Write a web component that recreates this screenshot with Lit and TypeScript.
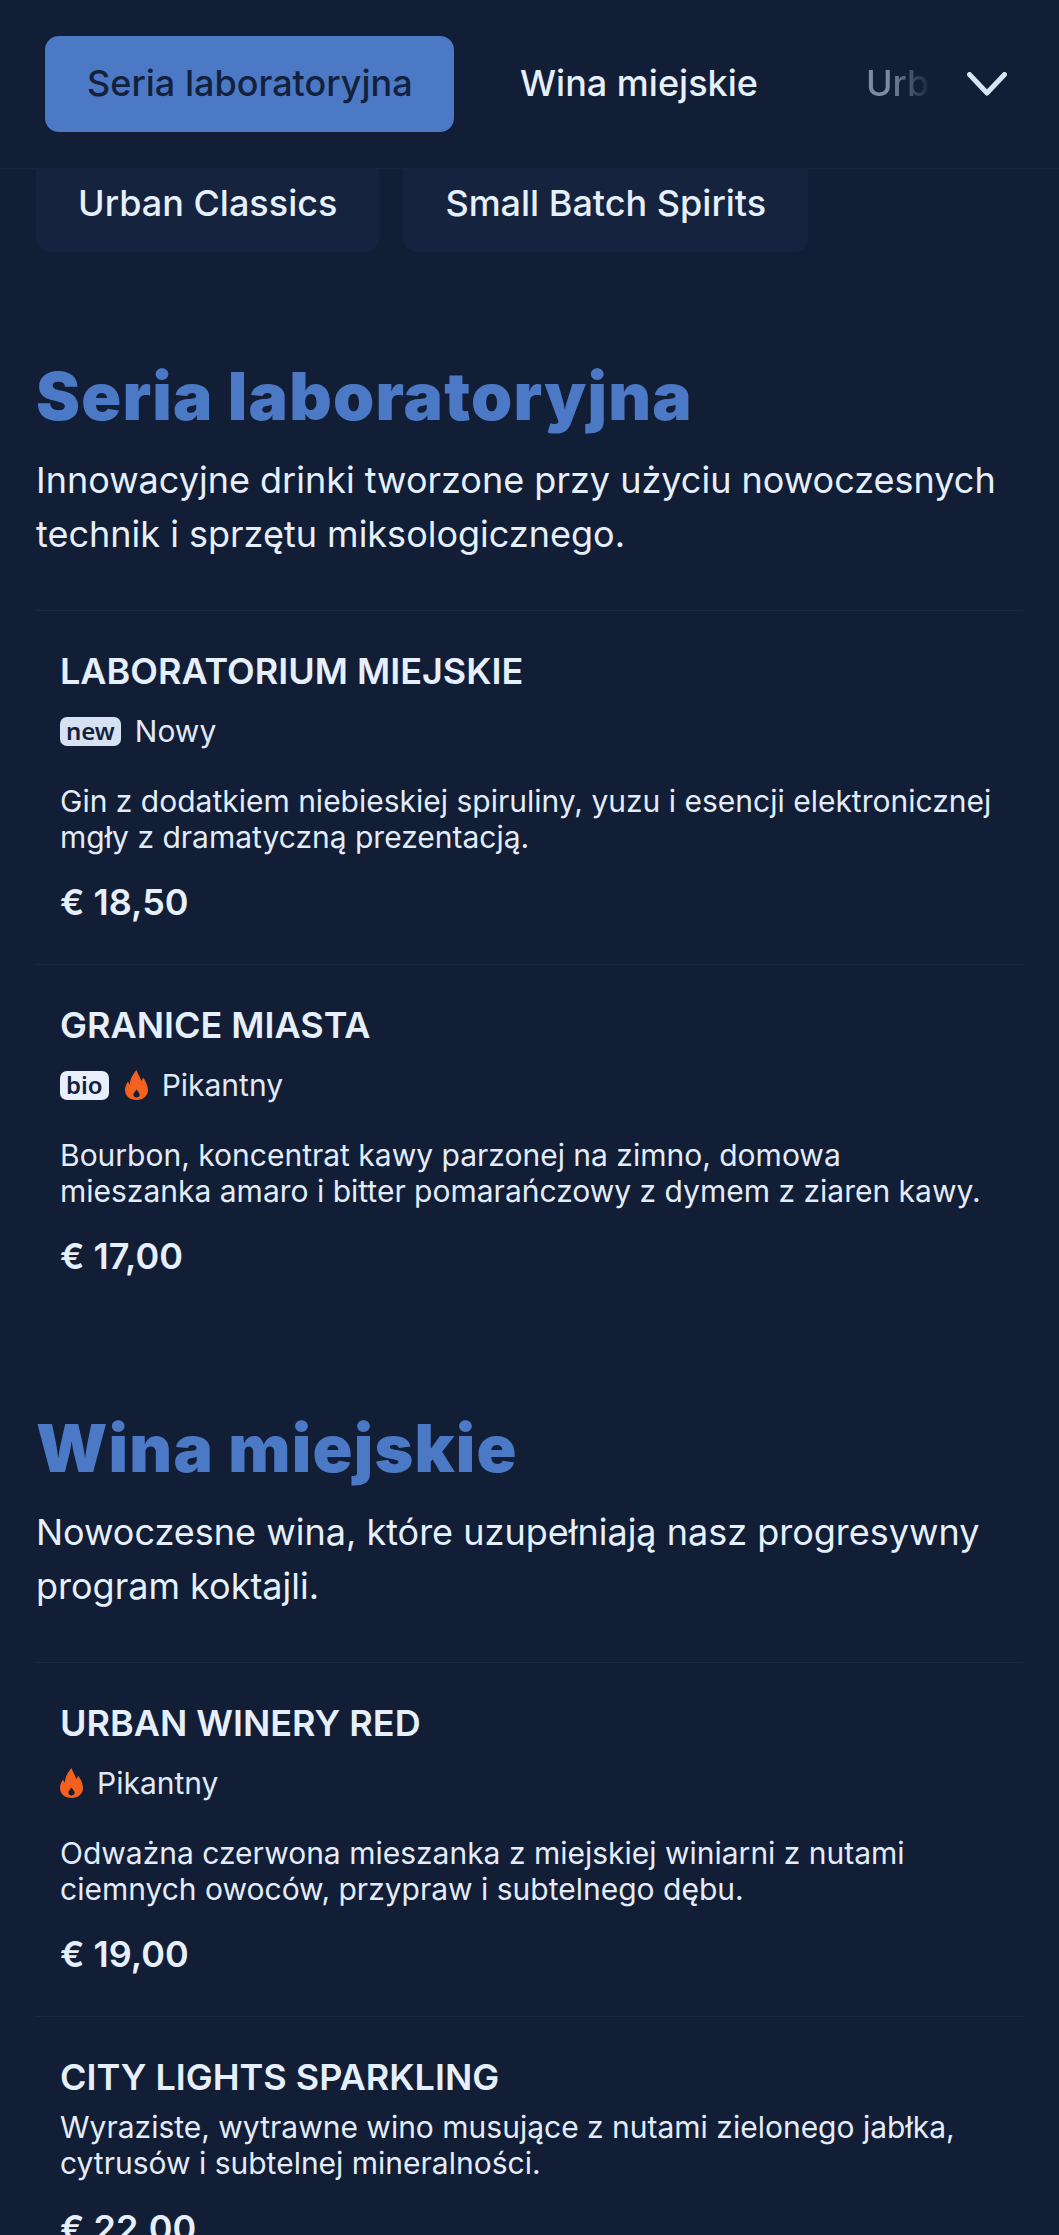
import { LitElement, html, css } from "lit";
import { customElement } from "lit/decorators.js";

const flame = html`<svg class="flame" viewBox="0 0 24 30" preserveAspectRatio="none" aria-hidden="true"><path fill="#f4601f" fill-rule="evenodd" d="M12 0C13 4 16 7 17 11C18 10 18.6 8.8 18.8 7.5C21.5 11 24 15.5 24 20C24 26 19 30 12 30C5 30 0 26 0 20C0 16.5 1.6 13.5 3.2 11.5C3.6 12.8 4.2 13.8 5.2 14.5C5 9 8.5 4 12 0ZM12 19.5C10.5 21.5 8.8 23 8.8 24.8C8.8 26.5 10.2 27.5 12 27.5C13.8 27.5 15.2 26.5 15.2 24.8C15.2 23 13.5 21.5 12 19.5Z"/></svg>`;

type Item = { name: string; badge?: string; tag?: string; fire?: boolean; desc: string[]; price: string };
const sections: { title: string; intro: string[]; items: Item[] }[] = [
  {
    title: "Seria laboratoryjna",
    intro: ["Innowacyjne drinki tworzone przy użyciu nowoczesnych", "technik i sprzętu miksologicznego."],
    items: [
      { name: "LABORATORIUM MIEJSKIE", badge: "new", tag: "Nowy", desc: ["Gin z dodatkiem niebieskiej spiruliny, yuzu i esencji elektronicznej", "mgły z dramatyczną prezentacją."], price: "€ 18,50" },
      { name: "GRANICE MIASTA", badge: "bio", fire: true, tag: "Pikantny", desc: ["Bourbon, koncentrat kawy parzonej na zimno, domowa", "mieszanka amaro i bitter pomarańczowy z dymem z ziaren kawy."], price: "€ 17,00" },
    ],
  },
  {
    title: "Wina miejskie",
    intro: ["Nowoczesne wina, które uzupełniają nasz progresywny", "program koktajli."],
    items: [
      { name: "URBAN WINERY RED", fire: true, tag: "Pikantny", desc: ["Odważna czerwona mieszanka z miejskiej winiarni z nutami", "ciemnych owoców, przypraw i subtelnego dębu."], price: "€ 19,00" },
      { name: "CITY LIGHTS SPARKLING", desc: ["Wyraziste, wytrawne wino musujące z nutami zielonego jabłka,", "cytrusów i subtelnej mineralności."], price: "€ 22,00" },
    ],
  },
];

@customElement("app-root")
export class AppRoot extends LitElement {
  static styles = css`
    :host { display: block; width: 1059px; height: 2235px; overflow: hidden; background: #121e35; color: #e6effc; font-family: Inter, "Liberation Sans", sans-serif; }
    .top { height: 169px; box-sizing: border-box; border-bottom: 1px solid #17243c; display: flex; align-items: flex-start; padding: 36px 0 0 45px; position: relative; overflow: hidden; }
    .tab { font-size: 36px; font-weight: 500; height: 96px; box-sizing: border-box; padding-top: 27px; line-height: 41px; white-space: nowrap; flex: none; }
    .tab.on { background: #4b79c5; color: #14213d; width: 409px; padding-left: 42px; border-radius: 14px; }
    .tab.plain { margin-left: 66px; }
    .fade { width: 66px; overflow: hidden; margin-left: 108px; color: #7d8aa2; -webkit-mask-image: linear-gradient(90deg, #000 35%, transparent 100%); mask-image: linear-gradient(90deg, #000 35%, transparent 100%); }
    .chev { position: absolute; left: 967px; top: 72px; width: 40px; height: 24px; }
    .row2 { display: flex; gap: 24px; padding: 0 0 0 36px; }
    .chip { height: 83px; box-sizing: border-box; background: #15233e; border-radius: 0 0 14px 14px; padding: 14px 42px 0; font-size: 36px; font-weight: 500; line-height: 41px; white-space: nowrap; }
    section { padding: 0 36px; }
    section.first { padding-top: 103px; }
    section.next { padding-top: 89px; }
    h2 { margin: 0; font-family: Inter, sans-serif; font-weight: 900; font-size: 66px; letter-spacing: 1.2px; line-height: 82px; color: #4b79c5; white-space: nowrap; }
    .intro { font-size: 36px; line-height: 54px; margin-top: 16px; padding-bottom: 49px; }
    .intro div { white-space: nowrap; }
    .item { border-top: 1px solid #1a273f; padding: 40px 24px 0; height: 354px; box-sizing: border-box; }
    .name { font-size: 36px; font-weight: 600; line-height: 41px; white-space: nowrap; }
    .meta { display: flex; align-items: center; gap: 14px; margin-top: 21px; height: 36px; font-size: 30px; line-height: 36px; color: #e0e9f7; }
    .badge { font-size: 24px; font-weight: 600; line-height: 27px; height: 29px; box-sizing: border-box; padding: 0 6px; border-radius: 7px; color: #14213d; background: #d6e1f2; font-family: "Noto Sans", sans-serif; }
    .badge.bio { background: #e8f0fd; margin-right: 2px; }
    .flame { width: 23px; height: 30px; flex: none; }
    .desc { font-size: 30px; line-height: 36px; margin-top: 34px; color: #e3ecfa; }
    .desc div { white-space: nowrap; }
    .price { font-size: 36px; font-weight: 600; line-height: 44px; margin-top: 25px; }
    .plainname + .desc { margin-top: 11px; }
  `;

  private item(i: Item) {
    const hasMeta = !!(i.badge || i.tag);
    return html`<div class="item">
      <div class="name ${hasMeta ? "" : "plainname"}">${i.name}</div>
      ${hasMeta
        ? html`<div class="meta">
            ${i.badge ? html`<span class="badge ${i.badge}">${i.badge}</span>` : ""}
            ${i.fire ? flame : ""}
            <span>${i.tag}</span>
          </div>`
        : ""}
      <div class="desc">${i.desc.map((d) => html`<div>${d}</div>`)}</div>
      <div class="price">${i.price}</div>
    </div>`;
  }

  render() {
    return html`
      <div class="top">
        <div class="tab on">Seria laboratoryjna</div>
        <div class="tab plain">Wina miejskie</div>
        <div class="tab fade">Urban Classics</div>
        <svg class="chev" viewBox="0 0 40 24"><path d="M2.5 2.5L20 21L37.5 2.5" fill="none" stroke="#d9e4f5" stroke-width="5" stroke-linecap="round" stroke-linejoin="round"/></svg>
      </div>
      <div class="row2"><div class="chip">Urban Classics</div><div class="chip">Small Batch Spirits</div></div>
      ${sections.map(
        (s, n) => html`<section class=${n === 0 ? "first" : "next"}>
          <h2>${s.title}</h2>
          <div class="intro">${s.intro.map((l) => html`<div>${l}</div>`)}</div>
          ${s.items.map((i) => this.item(i))}
        </section>`
      )}
    `;
  }
}
